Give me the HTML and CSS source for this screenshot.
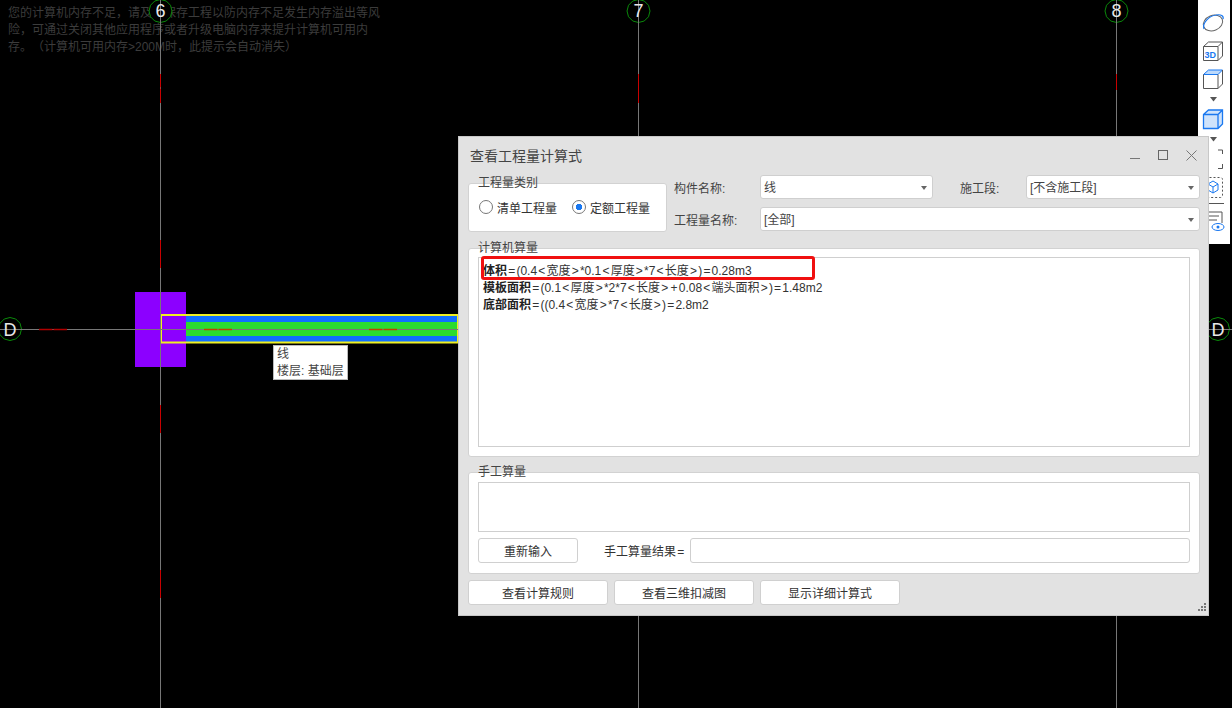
FILE: index.html
```html
<!DOCTYPE html>
<html lang="zh-CN">
<head>
    <meta charset="UTF-8">
    <title>查看工程量计算式</title>
    <link rel="stylesheet" href="styles.css">
</head>
<body>
    <div class="canvas">
        <p class="notice">您的计算机内存不足&#xFF0C;请及时保存工程以防内存不足发生内存溢出等风险&#xFF0C;可通过关闭其他应用程序或者升级电脑内存来提升计算机可用内存&#x3002;&#xFF08;计算机可用内存&gt;200M时&#xFF0C;此提示会自动消失&#xFF09;</p>

        <svg class="drawing" width="1232" height="708" viewBox="0 0 1232 708">
            <defs>
                <polygon id="bubble" points="11.500,0 10,5.750 5.750,10 0,11.500 -5.750,10 -10,5.750 -11.500,0 -10,-5.750 -5.750,-10 0,-11.500 5.750,-10 10,-5.750"/>
            </defs>
            <rect x="135" y="292" width="51" height="75" fill="#8c00ff"/>
            <rect x="186" y="316" width="272" height="26" fill="#0f6fff"/>
            <rect x="186" y="322" width="272" height="14" fill="#2bdc2f"/>
            <rect x="161" y="315" width="297" height="27.500" fill="none" stroke="#f0f020" stroke-width="2"/>
            <path d="M160.500 0V708M638.500 0V708M1116.500 0V708M0 329.500H1232" stroke="#777" fill="none"/>
            <path d="M160.500 74V87.500M160.500 88.500V103M160.500 240V268M160.500 405V433M160.500 570V598M638.500 74V103M1116.500 74V90" stroke="#c80000" fill="none"/>
            <path d="M39 329.500H52.500M53.500 329.500H67" stroke="#b00000" stroke-width="1.500" fill="none"/>
            <path d="M204 329.500H217.500M218.500 329.500H232M369 329.500H382.500M383.500 329.500H397" stroke="#c04000" stroke-width="1.500" fill="none"/>
            <g stroke="#0a8a0a" fill="#000">
                <use href="#bubble" x="160.500" y="11"/>
                <use href="#bubble" x="638.500" y="11"/>
                <use href="#bubble" x="1116.500" y="11"/>
                <use href="#bubble" x="10" y="329"/>
                <use href="#bubble" x="1218" y="329"/>
            </g>
            <path d="M160.500 0V23M638.500 0V23M1116.500 0V23M0 329.500H22M1206 329.500H1232" stroke="#777" fill="none"/>
            <g class="axis-label">
                <text x="160.500" y="17">6</text>
                <text x="638.500" y="17">7</text>
                <text x="1116.500" y="17">8</text>
                <text x="10" y="336">D</text>
                <text x="1218" y="336">D</text>
            </g>
        </svg>

        <div class="tip">
            <div>线</div>
            <div>楼层: 基础层</div>
        </div>

        <div class="toolbar">
            <svg width="24" height="24" viewBox="0 0 24 24" fill="none">
                <ellipse cx="12" cy="12" rx="10" ry="7.500" transform="rotate(-22 12 12)" stroke="#666"/>
                <path d="M3 18C1 12 8 5 15 4C20 3 23 5 22 8" stroke="#1a78f0" stroke-width="1.200"/>
            </svg>
            <svg width="24" height="24" viewBox="0 0 24 24" fill="none">
                <path d="M2.500 7.500L7.500 3H21.500V17L17 21.500H2.500Z M2.500 7.500H17V21.500M17 7.500L21.500 3" stroke="#555"/>
                <text class="tag-3d" x="3.500" y="19">3D</text>
            </svg>
            <svg width="24" height="24" viewBox="0 0 24 24" fill="none">
                <path d="M2.500 7.500L7.500 3H21.500L17 7.500H2.500Z" fill="#bcd9fb" stroke="#1a78f0"/>
                <path d="M2.500 7.500V21.500H17V7.500M17 21.500L21.500 17V3" stroke="#555"/>
            </svg>
            <svg class="caret" width="7" height="5" viewBox="0 0 7 5"><path d="M0 0H7L3.500 4.500Z" fill="#555"/></svg>
            <svg width="24" height="24" viewBox="0 0 24 24" fill="#cfe3fb">
                <path d="M2.500 7.500L7.500 3H21.500V17L17 21.500H2.500Z M2.500 7.500H17V21.500M17 7.500L21.500 3" stroke="#1a78f0" stroke-width="1.300"/>
            </svg>
            <svg class="caret" width="7" height="5" viewBox="0 0 7 5"><path d="M0 0H7L3.500 4.500Z" fill="#555"/></svg>
            <svg width="24" height="24" viewBox="0 0 24 24" fill="none">
                <path d="M3 7V3H7M17 3H21.500V7M21.500 17V21.500H17M7 21.500H3V17" stroke="#555"/>
            </svg>
            <svg width="24" height="24" viewBox="0 0 24 24" fill="none">
                <rect x="2.500" y="2.500" width="19" height="20" rx="2" stroke="#555" stroke-dasharray="2 2"/>
                <path d="M12 6L17 9V15L12 18L7 15V9ZM7 9L12 12L17 9M12 12V18" stroke="#1a78f0"/>
            </svg>
            <svg class="rule" width="24" height="2" viewBox="0 0 24 2"><path d="M5 .5H23" stroke="#555"/></svg>
            <svg width="24" height="24" viewBox="0 0 24 24" fill="none">
                <path d="M5 16V3H21V14M8 7H18M8 11H16M5 19V21H7" stroke="#555"/>
                <ellipse cx="17" cy="18" rx="6" ry="3.500" stroke="#1a78f0"/>
                <circle cx="17" cy="18" r="1.500" fill="#1a78f0"/>
            </svg>
        </div>

        <div class="dialog">
            <div class="title-bar">
                <span class="title">查看工程量计算式</span>
                <div class="win-btns">
                    <svg width="11" height="11" viewBox="0 0 11 11"><path d="M0 8.500H10" stroke="#777" fill="none"/></svg>
                    <svg width="11" height="11" viewBox="0 0 11 11"><rect x=".500" y=".500" width="9" height="9" stroke="#666" fill="none"/></svg>
                    <svg width="11" height="11" viewBox="0 0 11 11"><path d="M.500 .500L10.500 10.500M10.500 .500L.500 10.500" stroke="#777" fill="none"/></svg>
                </div>
            </div>

            <div class="top-row">
                <section class="group type-group">
                    <span class="legend">工程量类别</span>
                    <label class="radio"><span class="dot"></span>清单工程量</label>
                    <label class="radio"><span class="dot on"></span>定额工程量</label>
                </section>
                <div class="fields">
                    <span class="field-label">构件名称:</span>
                    <div class="combo">线<i></i></div>
                    <span class="field-label seg-label">施工段:</span>
                    <div class="combo">[不含施工段]<i></i></div>
                    <span class="field-label">工程量名称:</span>
                    <div class="combo wide">[全部]<i></i></div>
                </div>
            </div>

            <section class="group calc-group">
                <span class="legend">计算机算量</span>
                <div class="box calc-box">
                    <div><b>体积</b><span class="op">=</span>(0.4<span class="op">&lt;</span>宽度<span class="op">&gt;</span>*0.1<span class="op">&lt;</span>厚度<span class="op">&gt;</span>*7<span class="op">&lt;</span>长度<span class="op">&gt;</span>)<span class="op">=</span>0.28m3</div>
                    <div><b>模板面积</b><span class="op">=</span>(0.1<span class="op">&lt;</span>厚度<span class="op">&gt;</span>*2*7<span class="op">&lt;</span>长度<span class="op">&gt;</span><span class="op">+</span>0.08<span class="op">&lt;</span>端头面积<span class="op">&gt;</span>)<span class="op">=</span>1.48m2</div>
                    <div><b>底部面积</b><span class="op">=</span>((0.4<span class="op">&lt;</span>宽度<span class="op">&gt;</span>*7<span class="op">&lt;</span>长度<span class="op">&gt;</span>)<span class="op">=</span>2.8m2</div>
                    <span class="mark"></span>
                </div>
            </section>

            <section class="group manual-group">
                <span class="legend">手工算量</span>
                <div class="box manual-box"></div>
                <div class="manual-row">
                    <button class="btn reset-btn">重新输入</button>
                    <span class="result-label">手工算量结果<span class="op">=</span></span>
                    <div class="result-input"></div>
                </div>
            </section>

            <div class="bottom-row">
                <button class="btn">查看计算规则</button>
                <button class="btn">查看三维扣减图</button>
                <button class="btn">显示详细计算式</button>
            </div>

            <svg class="grip" width="9" height="9" viewBox="0 0 9 9">
                <path d="M6 0H8V2H6ZM3 3H5V5H3ZM6 3H8V5H6ZM0 6H2V8H0ZM3 6H5V8H3ZM6 6H8V8H6Z" fill="#777"/>
            </svg>
        </div>
    </div>
</body>
</html>
```

FILE: styles.css
```css
* {
    box-sizing: border-box;
}
body {
    margin: 0;
    background: #000;
    font-family: "Liberation Sans", "Noto Sans CJK SC", sans-serif;
    font-size: 12px;
    color: #333;
}
.canvas {
    position: relative;
    width: 1232px;
    height: 708px;
    overflow: hidden;
    background: #000;
}
.op {
    padding: 0 1.2px;
}
.notice {
    position: absolute;
    left: 8px;
    top: 5px;
    width: 373px;
    margin: 0;
    line-height: 17px;
    color: #3c3c3c;
    text-spacing-trim: space-all;
}
.drawing {
    position: absolute;
    left: 0;
    top: 0;
}
.axis-label text {
    font-family: "Liberation Sans", sans-serif;
    font-size: 18px;
    fill: #e8e8e8;
    text-anchor: middle;
}
.tip {
    position: absolute;
    left: 273px;
    top: 345px;
    width: 75px;
    height: 35px;
    padding: 0 3px;
    background: #fff;
    border: 1px solid #bbb;
    line-height: 17px;
    color: #444;
    white-space: nowrap;
}
.toolbar {
    position: absolute;
    left: 1198px;
    top: 0;
    width: 32px;
    height: 244px;
    padding: 11px 2px 0 0;
    background: #fff;
    display: flex;
    flex-direction: column;
    align-items: center;
    gap: 4px;
}
.caret {
    flex: none;
    margin: 2px 0 1px;
}
.rule {
    flex: none;
}
.tag-3d {
    font-family: "Liberation Sans", sans-serif;
    font-size: 9px;
    font-weight: bold;
    fill: #1a78f0;
}

.dialog {
    position: absolute;
    left: 458px;
    top: 136px;
    width: 751px;
    height: 480px;
    padding: 0 8px 0 9px;
    background: #e2e2e2;
    border: 1px solid #c8c8c8;
    display: flex;
    flex-direction: column;
}
.title-bar {
    height: 38px;
    padding-bottom: 2px;
    flex: none;
    display: flex;
    justify-content: space-between;
    align-items: center;
}
.title {
    margin-left: 2px;
    font-size: 14px;
    color: #444;
}
.win-btns {
    display: flex;
    gap: 17px;
    margin-right: 3px;
}
.top-row {
    display: flex;
    height: 57px;
    flex: none;
}
.group {
    position: relative;
    background: #fff;
    border: 1px solid #d2d2d2;
    border-radius: 3px;
}
.legend {
    position: absolute;
    left: 9px;
    top: -9px;
    line-height: 16px;
    color: #444;
}
.type-group {
    width: 199px;
    height: 49px;
    margin-top: 8px;
    padding: 10px 0 0 10px;
    display: flex;
    gap: 15px;
}
.radio {
    display: flex;
    align-items: center;
    gap: 4px;
    height: 26px;
    color: #333;
}
.dot {
    width: 14px;
    height: 14px;
    border: 1px solid #777;
    border-radius: 50%;
    background: #fff;
}
.dot.on {
    background: radial-gradient(circle, #1a78f0 0, #1a78f0 3px, #fff 3.5px);
}
.fields {
    margin-left: 7px;
    display: grid;
    grid-template-columns: 86px 173px 93px 174px;
    grid-auto-rows: 24px;
    row-gap: 8px;
    align-items: center;
}
.field-label {
    color: #444;
}
.seg-label {
    padding-left: 27px;
}
.combo {
    position: relative;
    height: 24px;
    padding-left: 3px;
    line-height: 24px;
    background: #fff;
    border: 1px solid #cfcfcf;
    border-radius: 3px;
    color: #444;
}
.combo.wide {
    grid-column: 2 / 5;
}
.combo i {
    position: absolute;
    right: 5px;
    top: 10px;
    border: 3px solid transparent;
    border-top: 4px solid #666;
    border-bottom: 0;
}
.calc-group {
    height: 209px;
    flex: none;
    margin-top: 16px;
    padding: 8px 9px 0;
}
.box {
    background: #fff;
    border: 1px solid #cfcfcf;
}
.calc-box {
    position: relative;
    height: 190px;
    padding: 5px 0 0 4px;
    line-height: 17px;
    color: #333;
}
.calc-box b {
    color: #222;
}
.mark {
    position: absolute;
    left: 2px;
    top: -2px;
    width: 334px;
    height: 24px;
    border: 3px solid #f01010;
    border-radius: 3px;
}
.manual-group {
    height: 102px;
    flex: none;
    margin-top: 15px;
    padding: 9px 9px 0;
}
.manual-box {
    height: 50px;
}
.manual-row {
    display: flex;
    align-items: center;
    margin-top: 6px;
}
.btn {
    height: 25px;
    width: 140px;
    padding: 0;
    background: #fff;
    border: 1px solid #d0d0d0;
    border-radius: 3px;
    font: inherit;
    color: #333;
}
.reset-btn {
    width: 100px;
}
.result-label {
    margin-left: 26px;
    width: 86px;
    white-space: nowrap;
}
.result-input {
    flex: 1;
    height: 25px;
    background: #fff;
    border: 1px solid #cfcfcf;
    border-radius: 3px;
}
.bottom-row {
    display: flex;
    gap: 6px;
    margin-top: 6px;
}
.grip {
    position: absolute;
    right: 1px;
    bottom: 3px;
}
```
